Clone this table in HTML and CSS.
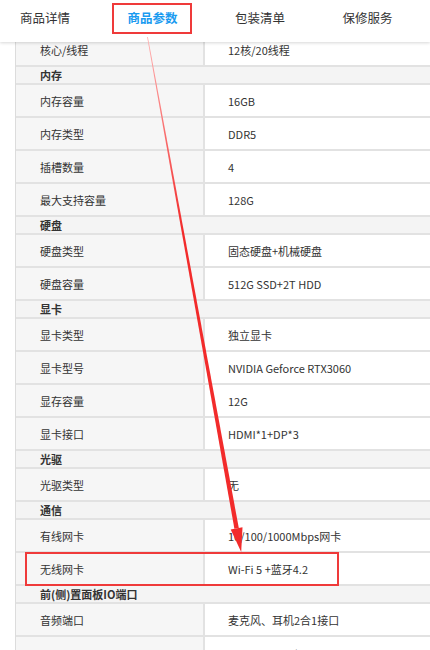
FILE: index.html
```html
<!DOCTYPE html>
<html lang="zh-CN">
<head>
<meta charset="utf-8">
<title>商品参数</title>
<link rel="stylesheet" href="styles.css">
</head>
<body>
<div class="page">
  <nav class="tabs">
    <span class="tab">商品详情</span>
    <span class="tab tab-active">商品参数</span>
    <span class="tab">包装清单</span>
    <span class="tab">保修服务</span>
  </nav>
  <div class="spec">
    <div class="row"><div class="k">核心/线程</div><div class="v">12核/20线程</div></div>
    <div class="group">内存</div>
    <div class="row"><div class="k">内存容量</div><div class="v">16GB</div></div>
    <div class="row"><div class="k">内存类型</div><div class="v">DDR5</div></div>
    <div class="row"><div class="k">插槽数量</div><div class="v">4</div></div>
    <div class="row"><div class="k">最大支持容量</div><div class="v">128G</div></div>
    <div class="group">硬盘</div>
    <div class="row"><div class="k">硬盘类型</div><div class="v">固态硬盘+机械硬盘</div></div>
    <div class="row"><div class="k">硬盘容量</div><div class="v">512G SSD+2T HDD</div></div>
    <div class="group">显卡</div>
    <div class="row"><div class="k">显卡类型</div><div class="v">独立显卡</div></div>
    <div class="row"><div class="k">显卡型号</div><div class="v">NVIDIA Geforce RTX3060</div></div>
    <div class="row"><div class="k">显存容量</div><div class="v">12G</div></div>
    <div class="row"><div class="k">显卡接口</div><div class="v">HDMI*1+DP*3</div></div>
    <div class="group">光驱</div>
    <div class="row"><div class="k">光驱类型</div><div class="v">无</div></div>
    <div class="group">通信</div>
    <div class="row"><div class="k">有线网卡</div><div class="v">10/100/1000Mbps网卡</div></div>
    <div class="row row-marked"><div class="k">无线网卡</div><div class="v">Wi-Fi 5 +蓝牙4.2</div></div>
    <div class="group">前(侧)置面板IO端口</div>
    <div class="row"><div class="k">音频端口</div><div class="v">麦克风、耳机2合1接口</div></div>
    <div class="row"><div class="k">USB</div><div class="v">USB3.2 Gen1*4</div></div>
  </div>
  <svg class="arrow" width="430" height="650" viewBox="0 0 430 650" aria-hidden="true">
    <defs>
      <linearGradient id="ag" gradientUnits="userSpaceOnUse" x1="0" y1="37" x2="0" y2="230">
        <stop offset="0" stop-color="#ffb0b0"/>
        <stop offset="1" stop-color="#f22b2b"/>
      </linearGradient>
    </defs>
    <polygon fill="url(#ag)" points="147.9,36.9 147.1,37.1 234.4,528.8 238.8,528.0"/>
    <polygon fill="#f22b2b" points="242.5,527.3 230.7,529.5 241.2,552"/>
  </svg>
</div>
</body>
</html>
```

FILE: styles.css
```css
html, body {
  margin: 0;
  padding: 0;
  background: #fff;
}

body {
  overflow: hidden;
  font-family: "Noto Sans CJK SC", "Noto Sans", sans-serif;
  color: #333;
}

.page {
  position: relative;
  width: 430px;
  height: 650px;
  overflow: hidden;
}

.tabs {
  position: relative;
  z-index: 2;
  height: 42px;
  display: flex;
  align-items: flex-start;
  gap: 57.5px;
  padding-left: 20px;
  background: #fff;
  box-shadow: 0 1px 3px rgba(0, 0, 0, 0.16);
  box-sizing: border-box;
}

.tab {
  position: relative;
  font-size: 12.5px;
  line-height: 36px;
  height: 36px;
  color: #333;
  white-space: nowrap;
}

.tab-active {
  color: #1a9bf0;
  font-weight: bold;
}

.tab-active::after {
  content: "";
  position: absolute;
  left: -16px;
  right: -14px;
  top: 3px;
  bottom: 2px;
  border: 2px solid #ef3a3a;
}

.spec {
  position: relative;
  z-index: 1;
  margin-top: -8px;
  margin-left: 15px;
  width: 600px;
  border-left: 1px solid #dcdcdc;
  font-size: 11px;
}

.row {
  position: relative;
  display: grid;
  grid-template-columns: 189px 1fr;
  height: 33px;
  box-sizing: border-box;
  border-bottom: 2px solid #e2e2e2;
}

.k {
  display: flex;
  align-items: center;
  padding-left: 24px;
  background: #f6f6f6;
  border-right: 2px solid #e2e2e2;
}

.v {
  display: flex;
  align-items: center;
  padding-left: 23px;
  background: #fff;
}

.group {
  height: 18px;
  box-sizing: border-box;
  border-bottom: 2px solid #e2e2e2;
  background: #f4f4f4;
  padding-left: 24px;
  font-weight: bold;
  line-height: 16px;
}

.row-marked::after {
  content: "";
  position: absolute;
  left: 9px;
  top: -1px;
  width: 314px;
  height: 34px;
  box-sizing: border-box;
  border: 2px solid #ef3a3a;
}

.arrow {
  position: absolute;
  left: 0;
  top: 0;
  z-index: 5;
  pointer-events: none;
}
```
